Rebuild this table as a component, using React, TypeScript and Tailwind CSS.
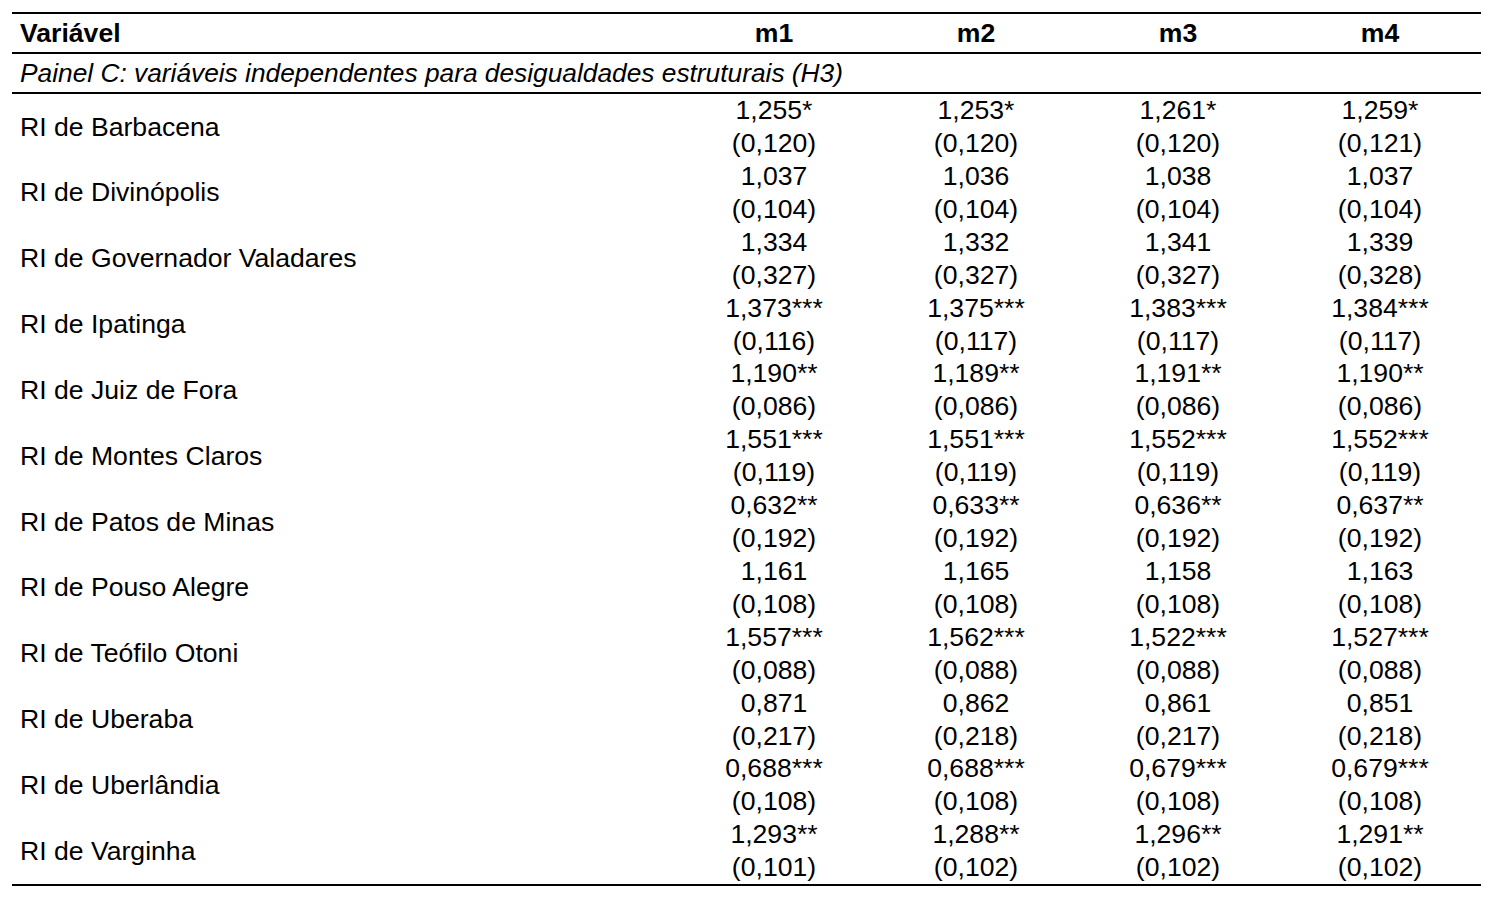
import React from 'react';

type Row = { label: string; values: [string, string][] };

const rows: Row[] = [
  { label: 'RI de Barbacena', values: [['1,255*', '(0,120)'], ['1,253*', '(0,120)'], ['1,261*', '(0,120)'], ['1,259*', '(0,121)']] },
  { label: 'RI de Divinópolis', values: [['1,037', '(0,104)'], ['1,036', '(0,104)'], ['1,038', '(0,104)'], ['1,037', '(0,104)']] },
  { label: 'RI de Governador Valadares', values: [['1,334', '(0,327)'], ['1,332', '(0,327)'], ['1,341', '(0,327)'], ['1,339', '(0,328)']] },
  { label: 'RI de Ipatinga', values: [['1,373***', '(0,116)'], ['1,375***', '(0,117)'], ['1,383***', '(0,117)'], ['1,384***', '(0,117)']] },
  { label: 'RI de Juiz de Fora', values: [['1,190**', '(0,086)'], ['1,189**', '(0,086)'], ['1,191**', '(0,086)'], ['1,190**', '(0,086)']] },
  { label: 'RI de Montes Claros', values: [['1,551***', '(0,119)'], ['1,551***', '(0,119)'], ['1,552***', '(0,119)'], ['1,552***', '(0,119)']] },
  { label: 'RI de Patos de Minas', values: [['0,632**', '(0,192)'], ['0,633**', '(0,192)'], ['0,636**', '(0,192)'], ['0,637**', '(0,192)']] },
  { label: 'RI de Pouso Alegre', values: [['1,161', '(0,108)'], ['1,165', '(0,108)'], ['1,158', '(0,108)'], ['1,163', '(0,108)']] },
  { label: 'RI de Teófilo Otoni', values: [['1,557***', '(0,088)'], ['1,562***', '(0,088)'], ['1,522***', '(0,088)'], ['1,527***', '(0,088)']] },
  { label: 'RI de Uberaba', values: [['0,871', '(0,217)'], ['0,862', '(0,218)'], ['0,861', '(0,217)'], ['0,851', '(0,218)']] },
  { label: 'RI de Uberlândia', values: [['0,688***', '(0,108)'], ['0,688***', '(0,108)'], ['0,679***', '(0,108)'], ['0,679***', '(0,108)']] },
  { label: 'RI de Varginha', values: [['1,293**', '(0,101)'], ['1,288**', '(0,102)'], ['1,296**', '(0,102)'], ['1,291**', '(0,102)']] },
];

const cols = 'grid grid-cols-[661px_202px_202px_202px_202px]';

export default function App() {
  return (
    <div className="min-h-[908px] w-[1496px] bg-white pl-[12px] pt-[12px] text-black font-['Liberation_Sans',Arial,sans-serif] text-[26.6px]">
      <div className="w-[1469px] border-t-2 border-b-2 border-black">
        <div className={`${cols} h-[38px] items-center font-bold leading-none`}>
          <div className="pl-2">Variável</div>
          <div className="text-center">m1</div>
          <div className="text-center">m2</div>
          <div className="text-center">m3</div>
          <div className="text-center">m4</div>
        </div>
        <div className="flex h-[42px] items-center border-t-2 border-b-2 border-black pl-2 text-[26.3px] italic leading-none">
          Painel C: variáveis independentes para desigualdades estruturais (H3)
        </div>
        <div className="grid h-[790px] grid-rows-12">
          {rows.map((r) => (
            <div key={r.label} className={`${cols} items-center`}>
              <div className="pl-2 leading-[33px]">{r.label}</div>
              {r.values.map(([coef, se], i) => (
                <div key={i} className="flex flex-col items-center leading-[33px]">
                  <span>{coef}</span>
                  <span>{se}</span>
                </div>
              ))}
            </div>
          ))}
        </div>
      </div>
    </div>
  );
}
